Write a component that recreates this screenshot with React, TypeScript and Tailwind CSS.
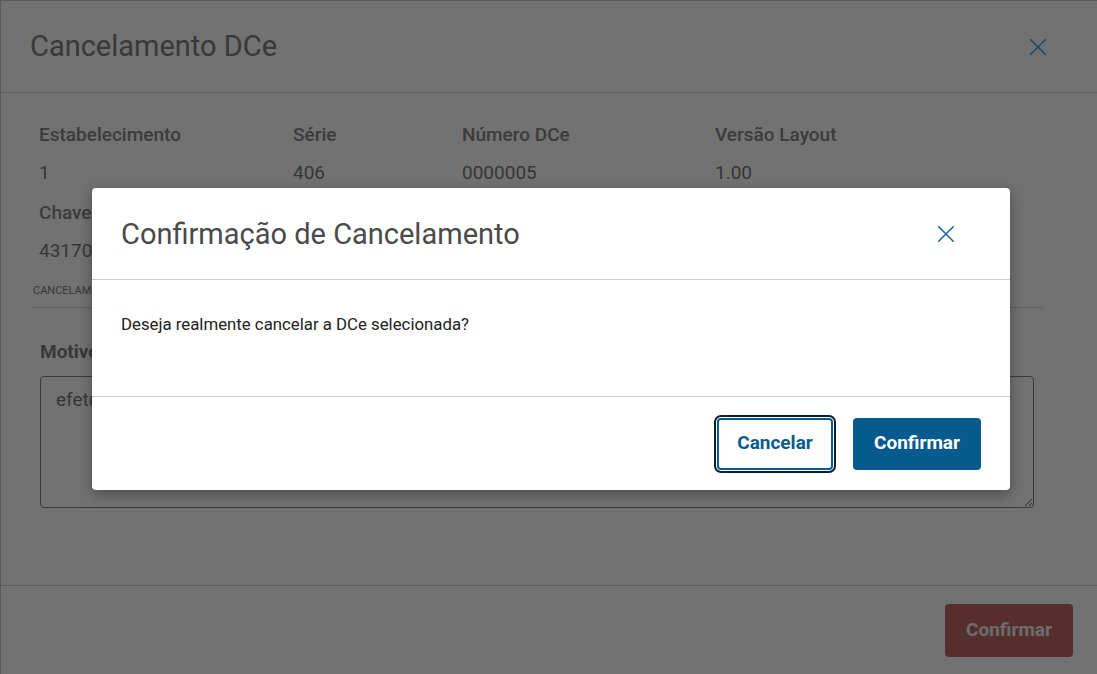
import React from 'react';

function CloseIcon({ className }: { className?: string }) {
  return (
    <svg viewBox="0 0 20 20" className={className} fill="none" stroke="currentColor" strokeWidth={1.8} strokeLinecap="square">
      <path d="M2 2 L18 18 M18 2 L2 18" />
    </svg>
  );
}

function Field({ label, value, width }: { label: string; value: string; width: string }) {
  return (
    <div className={`${width} shrink-0`}>
      <div className="text-[19px] leading-[38px] font-medium text-[#868686]">{label}</div>
      <div className="text-[19px] leading-[38px] text-[#7a7a7a]">{value}</div>
    </div>
  );
}

export default function App() {
  return (
    <div className="relative w-[1097px] h-[674px] overflow-hidden bg-white font-['Roboto',sans-serif]">
      {/* underlying modal */}
      <div className="flex flex-col h-full border-l border-t border-[#c8c8c8]">
        <div className="flex items-center justify-between h-[92px] shrink-0 border-b border-[#d3d3d3] pl-[29px] pr-[50px]">
          <h1 className="text-[29px] text-[#808080]">Cancelamento DCe</h1>
          <CloseIcon className="w-[18px] h-[18px] text-[#4aa3dd]" />
        </div>

        <div className="flex-1 pt-[23px] pl-[30px] pr-[54px]">
          <div className="pl-[8px]">
            <div className="flex">
              <Field label="Estabelecimento" value="1" width="w-[254px]" />
              <Field label="Série" value="406" width="w-[169px]" />
              <Field label="Número DCe" value="0000005" width="w-[253px]" />
              <Field label="Versão Layout" value="1.00" width="w-[200px]" />
            </div>
            <div className="mt-[2px]">
              <Field label="Chave de Acesso" value="43170612345678000190990010000000051000000057" width="w-full" />
            </div>
          </div>

          <div className="mt-[14px] border-b border-[#d3d3d3] pl-[2px] pb-[9px] text-[11px] leading-[14px] text-[#7e7e7e]">
            CANCELAMENTO
          </div>

          <div className="pl-[9px] pr-[9px]">
            <div className="mt-[31px] text-[19px] leading-[26px] font-bold text-[#7e7e7e]">Motivo do Cancelamento</div>
            <textarea
              readOnly
              defaultValue="efetuado cancelamento por erro de emissão"
              className="mt-[11px] block w-full h-[132px] rounded-[4px] border border-[#808080] px-[15px] py-[10px] text-[19px] leading-[26px] text-[#7a7a7a] outline-none"
            />
          </div>
        </div>

        <div className="flex justify-end items-center h-[89px] shrink-0 border-t border-[#d3d3d3] pr-[24px]">
          <button className="w-[128px] h-[53px] rounded-[4px] bg-[#c16868] text-[#f2f2f2] text-[19px] font-bold">
            Confirmar
          </button>
        </div>
      </div>

      {/* backdrop */}
      <div className="absolute inset-0 bg-black/[0.553]" />

      {/* confirmation dialog */}
      <div className="absolute inset-0 flex justify-center pt-[188px] pl-[5px]">
        <div className="w-[918px] h-[302px] bg-white rounded-[4px] shadow-[0_4px_14px_rgba(0,0,0,0.35)] flex flex-col">
          <div className="flex items-center justify-between h-[92px] border-b border-[#cccccc] pl-[29px] pr-[55px]">
            <h2 className="text-[29px] text-[#4a4a4a] pt-[3px]">Confirmação de Cancelamento</h2>
            <CloseIcon className="w-[18px] h-[18px] text-[#1b6aa1]" />
          </div>
          <div className="h-[117px] border-b border-[#cccccc] pl-[29px] pt-[33px]">
            <p className="text-[16.8px] leading-[22px] text-[#222222]">Deseja realmente cancelar a DCe selecionada?</p>
          </div>
          <div className="flex-1 flex items-center justify-end gap-[20px] pr-[29px]">
            <button className="w-[116px] h-[52px] rounded-[4px] border-2 border-[#0a5a8c] bg-white text-[#0a5a8c] text-[19px] font-bold ring-2 ring-[#0b2036] ring-offset-1 ring-offset-white">
              Cancelar
            </button>
            <button className="w-[128px] h-[52px] rounded-[4px] bg-[#075a8e] text-white text-[19px] font-bold">
              Confirmar
            </button>
          </div>
        </div>
      </div>
    </div>
  );
}
